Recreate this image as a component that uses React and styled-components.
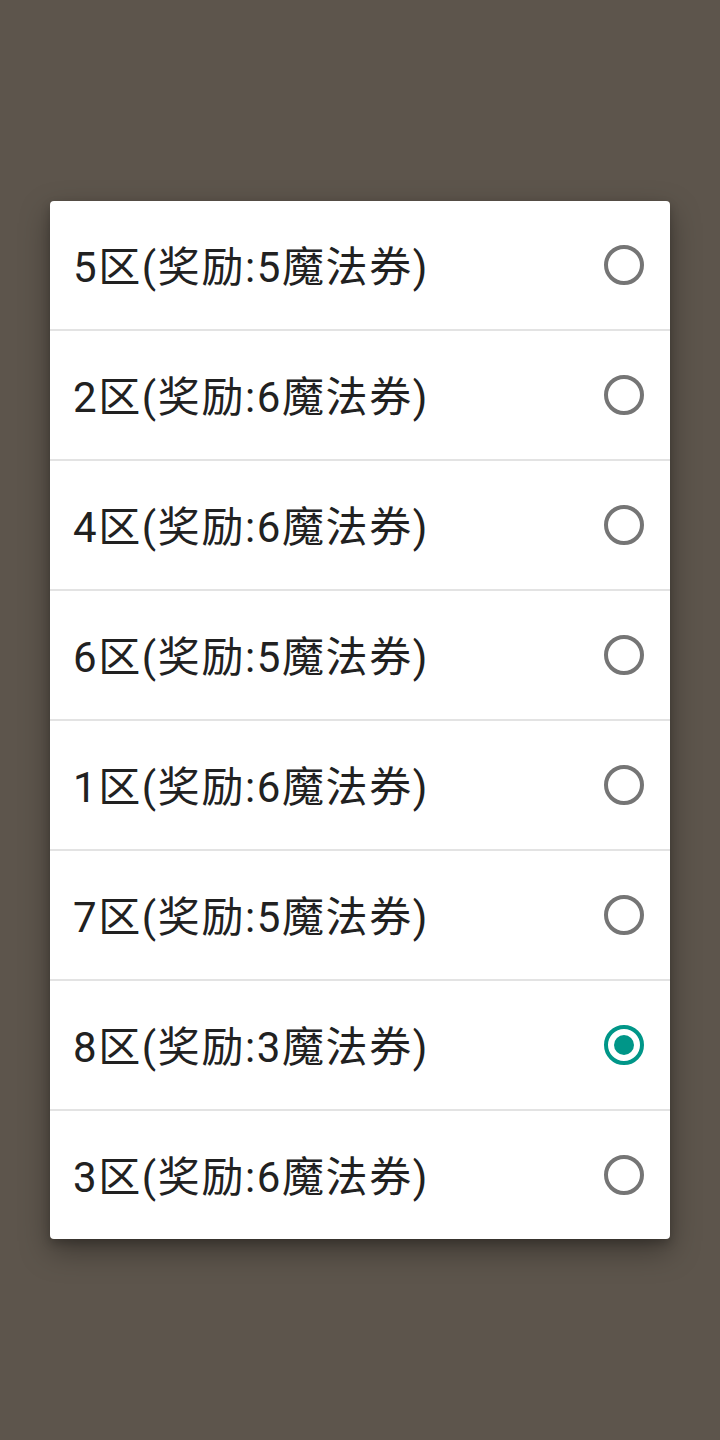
import React from "react";
import styled, { createGlobalStyle } from "styled-components";

const Global = createGlobalStyle`
  html, body { margin: 0; padding: 0; background: #5d554c; }
  body { font-family: Roboto, "Noto Sans CJK SC", sans-serif; }
`;

const Screen = styled.div`
  width: 720px;
  height: 1440px;
  background: #5d554c;
  display: flex;
  flex-direction: column;
  align-items: center;
  padding-top: 201px;
  box-sizing: border-box;
`;

const Dialog = styled.div`
  width: 620px;
  background: #fff;
  border-radius: 4px;
  box-shadow: 0 12px 30px rgba(0, 0, 0, 0.35), 0 4px 10px rgba(0, 0, 0, 0.2);
  display: flex;
  flex-direction: column;
  overflow: hidden;
`;

const Row = styled.div`
  display: flex;
  align-items: center;
  justify-content: space-between;
  padding: 0 26px 0 23px;
  box-sizing: border-box;
  border-top: ${(p) => (p.$first ? "none" : "2px solid #e3e3e3")};
  height: ${(p) => (p.$first ? "128px" : "130px")};
`;

const Label = styled.span`
  font-family: Roboto, "Noto Sans CJK SC", sans-serif;
  font-size: 42px;
  letter-spacing: 1.6px;
  line-height: 1;
  padding-top: 5px;
  color: #212121;
`;

const Radio = styled.span`
  width: 40px;
  height: 40px;
  box-sizing: border-box;
  border-radius: 50%;
  border: 4px solid ${(p) => (p.$checked ? "#009688" : "#757575")};
  display: flex;
  align-items: center;
  justify-content: center;
  &::after {
    content: "";
    width: 20px;
    height: 20px;
    border-radius: 50%;
    background: #009688;
    display: ${(p) => (p.$checked ? "block" : "none")};
  }
`;

const items = [
  { zone: "5区", reward: 5 },
  { zone: "2区", reward: 6 },
  { zone: "4区", reward: 6 },
  { zone: "6区", reward: 5 },
  { zone: "1区", reward: 6 },
  { zone: "7区", reward: 5 },
  { zone: "8区", reward: 3, checked: true },
  { zone: "3区", reward: 6 },
];

export default function App() {
  return (
    <>
      <Global />
      <Screen>
        <Dialog>
          {items.map((it, i) => (
            <Row key={i} $first={i === 0}>
              <Label>{`${it.zone}(奖励:${it.reward}魔法券)`}</Label>
              <Radio $checked={!!it.checked} />
            </Row>
          ))}
        </Dialog>
      </Screen>
    </>
  );
}
